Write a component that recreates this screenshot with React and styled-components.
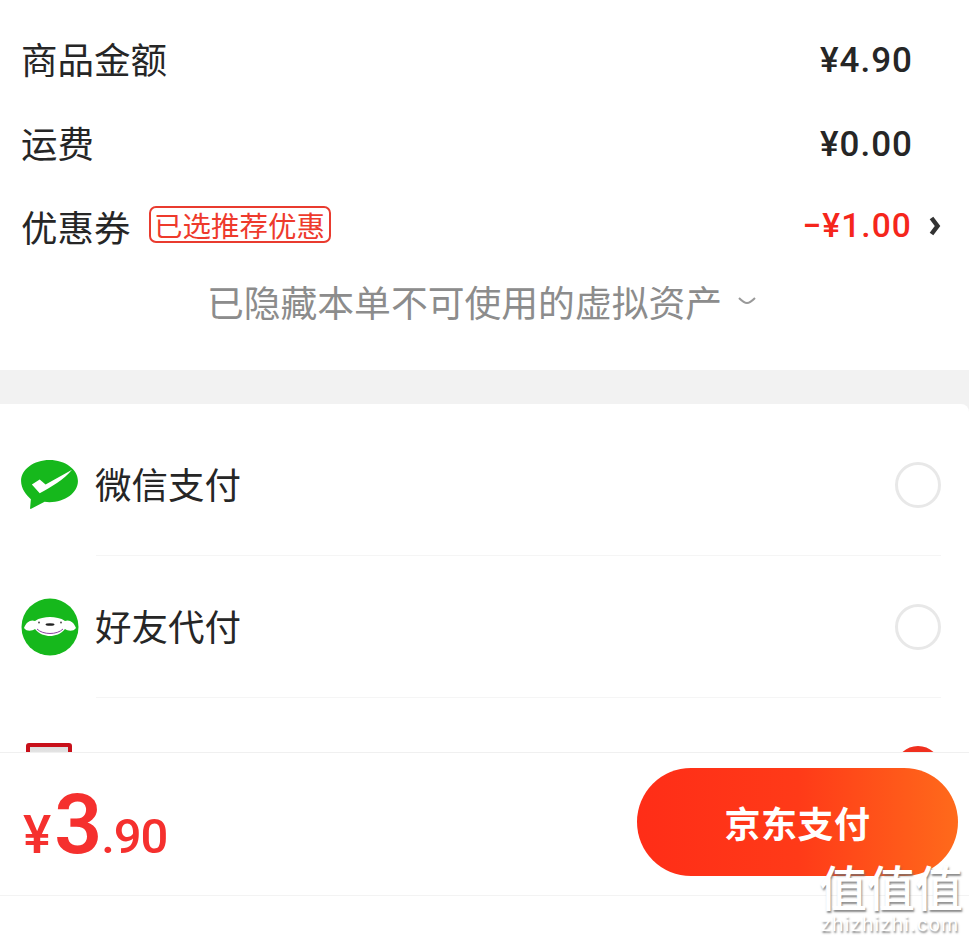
import React from "react";
import styled, { createGlobalStyle } from "styled-components";

const Global = createGlobalStyle`
  html, body { margin: 0; padding: 0; background: #fff; }
  * { box-sizing: border-box; }
`;
const FONT = `"Noto Sans CJK SC", "Noto Sans", sans-serif`;
const NUM = `Roboto, "Noto Sans CJK SC", sans-serif`;

const Page = styled.div`
  position: relative;
  width: 969px;
  height: 942px;
  overflow: hidden;
  background: #fff;
  font-family: ${FONT};
  color: #262626;
  display: flex;
  flex-direction: column;
`;
const Scroll = styled.div`
  height: 752px;
  overflow: hidden;
  flex: none;
  background: #f2f2f2;
`;
const Summary = styled.section`
  height: 370px;
  background: #fff;
  padding: 18px 27px 0 21px;
`;
const Row = styled.div`
  height: 84px;
  display: flex;
  align-items: center;
`;
const Label = styled.span`
  font-size: 36.5px;
  line-height: 50px;
  margin-top: -3px;
`;
const CouponLabel = styled(Label)`
  margin-top: 1px;
`;
const Amount = styled.span`
  margin-left: auto;
  margin-right: 29px;
  font-family: ${NUM};
  font-size: 35px;
  font-weight: 500;
  letter-spacing: 1px;
  color: #262626;
`;
const Discount = styled(Amount)`
  font-size: 33.5px;
  letter-spacing: 1.1px;
  color: #f5261c;
  margin-top: -2px;
`;
const Tag = styled.span`
  margin-left: 18px;
  margin-top: -4px;
  height: 37px;
  width: 182px;
  border: 2px solid #e93b2f;
  border-radius: 7px;
  color: #ee3a2c;
  font-size: 28.5px;
  line-height: 33px;
  text-align: center;
  white-space: nowrap;
`;
const CouponRow = styled(Row)`
  height: 80px;
`;
const Chevron = styled.svg`
  margin-left: -13px;
  width: 14px;
  height: 22px;
  flex: none;
`;
const Hidden = styled.div`
  display: flex;
  justify-content: center;
  align-items: center;
  gap: 16px;
  margin-top: 10px;
  height: 50px;
  color: #8c8c8c;
  font-size: 36.8px;
  white-space: nowrap;
`;
const Panel = styled.section`
  margin-top: 34px;
  background: #fff;
  border-radius: 0 8px 0 0;
  padding: 10px 28px 0 21px;
`;
const Pay = styled.div`
  height: 141px;
  display: flex;
  align-items: center;
`;
const Divider = styled.div`
  height: 1px;
  margin-left: 75px;
  background: #f5f5f5;
`;
const IconSlot = styled.div`
  width: 74px;
  flex: none;
  display: flex;
`;
const PayName = styled.span`
  font-size: 36.5px;
  line-height: 50px;
  margin-top: -2px;
`;
const Radio = styled.span`
  margin-left: auto;
  width: 46px;
  height: 46px;
  border-radius: 50%;
  border: 3px solid #e8e8e8;
  background: #fff;
  ${(p) => p.$on && "background:#f0301f;border-color:#f0301f;"}
`;
const Footer = styled.footer`
  height: 144px;
  flex: none;
  background: #fff;
  border-top: 1px solid #f0f0f0;
  border-bottom: 1px solid #f3f3f3;
  display: flex;
  align-items: center;
  justify-content: space-between;
  padding: 0 11px 4px 23px;
`;
const Total = styled.div`
  color: #f5302e;
  font-family: ${NUM};
  display: flex;
  align-items: baseline;
  margin-top: 6px;
`;
const Yen = styled.span`
  font-size: 53px;
  font-weight: 500;
`;
const Big = styled.span`
  font-size: 84px;
  font-weight: 600;
  line-height: 84px;
  letter-spacing: -1px;
  margin-left: 3px;
`;
const Small = styled.span`
  font-size: 49px;
  font-weight: 500;
  letter-spacing: -1px;
`;
const PayButton = styled.button`
  width: 321px;
  height: 108px;
  border: 0;
  border-radius: 54px;
  background: linear-gradient(90deg, #ff2d17 0%, #ff3a18 50%, #ff6a1b 100%);
  color: #fff;
  font-family: ${FONT};
  font-size: 36px;
  font-weight: 700;
  letter-spacing: 0.5px;
  padding: 0;
`;
const Watermark = styled.div`
  position: absolute;
  right: 8px;
  bottom: 7px;
  width: 142px;
  color: #fff;
  text-align: center;
  text-shadow: 1px 2px 2px rgba(110, 110, 110, 0.8);
`;
const WmTop = styled.div`
  font-size: 48px;
  line-height: 48px;
  font-weight: 500;
  white-space: nowrap;
`;
const WmBottom = styled.div`
  font-family: "Liberation Sans", sans-serif;
  font-size: 20.5px;
  line-height: 23px;
  margin-top: 3px;
  letter-spacing: 1.2px;
  white-space: nowrap;
`;

const Wechat = () => (
  <svg width="57" height="50" viewBox="0 0 58 51">
    <path d="M29 0C13 0 0 9.600 0 21.500c0 8 5.500 14.500 10 18.500l-.8 9.300c0 .7.600.9 1.100.5L24 42.700c1.600.2 3.300.3 5 .3 16 0 29-9.600 29-21.500S45 0 29 0z" fill="#16b81c" />
    <path d="M11 25l8-5 6 5 27-15C44 20 30 28 19 34z" fill="#fff" />
  </svg>
);
const Friend = () => (
  <svg width="58" height="58" viewBox="0 0 58 58">
    <circle cx="29" cy="29" r="28.500" fill="#16b81c" />
    <path d="M3 30C5 24 10 21 14 23 18 20 24 19 29 19 34 19 40 20 44 23 48 21 53 24 55 30 52 34 47 33 44 31 40 36 34 38 29 38 24 38 18 36 14 31 11 33 6 34 3 30z" fill="#fff" />
    <ellipse cx="29" cy="26.500" rx="4.500" ry="1.300" fill="#222" />
    <circle cx="18" cy="24.500" r="1" fill="#555" />
    <circle cx="40" cy="24.500" r="1" fill="#555" />
    <path d="M16 31c6 6 20 6 26 0" fill="none" stroke="#8a3fa0" strokeWidth="1" />
  </svg>
);
const JD = styled.div`
  width: 46px;
  height: 52px;
  margin-left: 5px;
  border: 4px solid #c8101a;
  border-radius: 3px;
  background: linear-gradient(#ddd, #f5f5f5 40%);
`;

export default function App() {
  return (
    <Page>
      <Global />
      <Scroll>
        <Summary>
          <Row>
            <Label>商品金额</Label>
            <Amount>¥4.90</Amount>
          </Row>
          <Row>
            <Label>运费</Label>
            <Amount>¥0.00</Amount>
          </Row>
          <CouponRow>
            <CouponLabel>优惠券</CouponLabel>
            <Tag>已选推荐优惠</Tag>
            <Discount>−¥1.00</Discount>
            <Chevron viewBox="0 0 14 22">
              <path d="M3.500 3l6 8-6 8" fill="none" stroke="#333" strokeWidth="4.500" />
            </Chevron>
          </CouponRow>
          <Hidden>
            已隐藏本单不可使用的虚拟资产
            <svg width="18" height="10" viewBox="0 0 18 10">
              <path d="M1 2c3 3 6 5 8 5s5-2 8-5" fill="none" stroke="#999" strokeWidth="2" />
            </svg>
          </Hidden>
        </Summary>
        <Panel>
          <Pay>
            <IconSlot><Wechat /></IconSlot>
            <PayName>微信支付</PayName>
            <Radio />
          </Pay>
          <Divider />
          <Pay>
            <IconSlot><Friend /></IconSlot>
            <PayName>好友代付</PayName>
            <Radio />
          </Pay>
          <Divider />
          <Pay>
            <IconSlot><JD /></IconSlot>
            <Radio $on />
          </Pay>
        </Panel>
      </Scroll>
      <Footer>
        <Total>
          <Yen>¥</Yen>
          <Big>3</Big>
          <Small>.90</Small>
        </Total>
        <PayButton>京东支付</PayButton>
      </Footer>
      <Watermark>
        <WmTop>值值值</WmTop>
        <WmBottom>zhizhizhi.com</WmBottom>
      </Watermark>
    </Page>
  );
}
